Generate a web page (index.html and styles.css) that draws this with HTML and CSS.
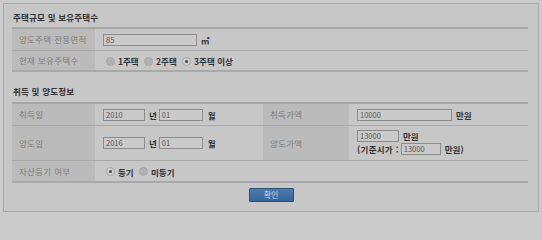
FILE: index.html
```html
<!DOCTYPE html>
<html lang="ko">
<head>
<meta charset="utf-8">
<link rel="stylesheet" href="styles.css">
</head>
<body>
<div class="panel">
  <h3 class="sec-title first">주택규모 및 보유주택수</h3>
  <table class="form-table">
    <tr class="r1">
      <th class="lab">양도주택 전용면적</th>
      <td class="val"><span class="inp w92">85</span><span class="unit">㎡</span></td>
    </tr>
    <tr class="r2">
      <th class="lab">현재 보유주택수</th>
      <td class="val">
        <span class="radio"></span><span class="rl">1주택</span>
        <span class="radio"></span><span class="rl">2주택</span>
        <span class="radio on"></span><span class="rl">3주택 이상</span>
      </td>
    </tr>
  </table>

  <h3 class="sec-title second">취득 및 양도정보</h3>
  <table class="form-table t2">
    <tr class="r3">
      <th class="lab c1">취득일</th>
      <td class="val c2"><span class="inp w40">2010</span><span class="unit u1">년</span><span class="inp w42">01</span><span class="unit u2">월</span></td>
      <th class="lab c3">취득가액</th>
      <td class="val c4"><span class="inp w93">10000</span><span class="unit">만원</span></td>
    </tr>
    <tr class="r4">
      <th class="lab">양도일</th>
      <td class="val"><span class="inp w40">2016</span><span class="unit u1">년</span><span class="inp w42">01</span><span class="unit u2">월</span></td>
      <th class="lab">양도가액</th>
      <td class="val">
        <div class="line1"><span class="inp w40">13000</span><span class="unit">만원</span></div>
        <div class="line2"><span class="unit paren">(기준시가 :</span><span class="inp w38">13000</span><span class="unit">만원)</span></div>
      </td>
    </tr>
    <tr class="r5">
      <th class="lab">자산등기 여부</th>
      <td class="val" colspan="3">
        <span class="radio on"></span><span class="rl">등기</span>
        <span class="radio"></span><span class="rl">미등기</span>
      </td>
    </tr>
  </table>
  <div class="actions"><button class="btn">확인</button></div>
</div>
</body>
</html>
```

FILE: styles.css
```css
html, body {
  margin: 0;
  padding: 0;
  background: #cbcbcb;
}
body {
  font-family: "Noto Sans CJK KR", "Noto Sans", sans-serif;
  font-size: 8.5px;
  color: #3a3a3a;
  padding: 3px;
  overflow: hidden;
}
.panel {
  width: 516px;
  height: 207px;
  border: 1px solid #a9a9a9;
  background: #c7c7c7;
  padding: 0 10px 0 8px;
}
.sec-title {
  margin: 0;
  font-size: 8.5px;
  font-weight: bold;
  line-height: 12px;
  color: #333;
  letter-spacing: 0.2px;
  padding-left: 1px;
}
.sec-title.first { padding-top: 7px; margin-bottom: 4px; }
.sec-title.second { margin-top: 13px; margin-bottom: 5px; }
.form-table {
  width: 516px;
  border-collapse: collapse;
  border-top: 2px solid #a6a6a6;
}
.form-table tr { border-bottom: 1px solid #a9a9a9; }
.form-table tr:last-child { border-bottom: 2px solid #a9a9a9; }
.lab {
  background: #bbbbbb;
  color: #7b7b7b;
  font-weight: normal;
  text-align: left;
  padding: 0 0 0 7px;
  width: 76px;
  letter-spacing: 0.3px;
  white-space: nowrap;
}
.val {
  padding: 0 0 0 8px;
  white-space: nowrap;
}
.r1 { height: 22px; }
.r2 { height: 21px; }
.r3 { height: 22px; }
.r4 { height: 35px; }
.r5 { height: 22px; }
.t2 .c2 { width: 160px; }
.t2 .c3 { width: 79px; }
.inp {
  display: inline-block;
  vertical-align: middle;
  height: 10px;
  line-height: 10px;
  border: 1px solid #8c8c8c;
  background: #cacaca;
  color: #555;
  font-size: 7.5px;
  padding-left: 2px;
  box-sizing: content-box;
}
.w92 { width: 90px; }
.w40 { width: 38px; }
.w42 { width: 40px; }
.w93 { width: 91px; }
.w38 { width: 36px; }
.unit {
  display: inline-block;
  vertical-align: middle;
  font-weight: bold;
  color: #333;
  margin-left: 4px;
}
.u1 { margin-left: 4px; margin-right: 2px; }
.u2 { margin-left: 5px; }
.paren { margin-left: 0; margin-right: 2px; letter-spacing: 0.3px; }
.line1 { display: flex; align-items: center; height: 12px; }
.line2 { display: flex; align-items: center; height: 13px; margin-top: 1px; }
.radio {
  display: inline-block;
  vertical-align: middle;
  width: 7px;
  height: 7px;
  border-radius: 50%;
  background: #b1b1b1;
  border: 1px solid #a8a8a8;
  margin: 0 3px 0 3px;
  position: relative;
}
.radio.on {
  background: #d0d0d0;
}
.radio.on::after {
  content: "";
  position: absolute;
  left: 2px;
  top: 2px;
  width: 3px;
  height: 3px;
  border-radius: 50%;
  background: #444;
}
.rl {
  display: inline-block;
  vertical-align: middle;
  font-weight: bold;
  color: #333;
}
.actions {
  text-align: center;
  padding-top: 5px;
  padding-left: 2px;
}
.btn {
  width: 45px;
  height: 14px;
  border: 1px solid #2e4f78;
  background: linear-gradient(#4d7bb0, #35659a);
  color: #c9d6e6;
  font-family: inherit;
  font-size: 8px;
  line-height: 12px;
  padding: 0;
  border-radius: 1px;
}
```
